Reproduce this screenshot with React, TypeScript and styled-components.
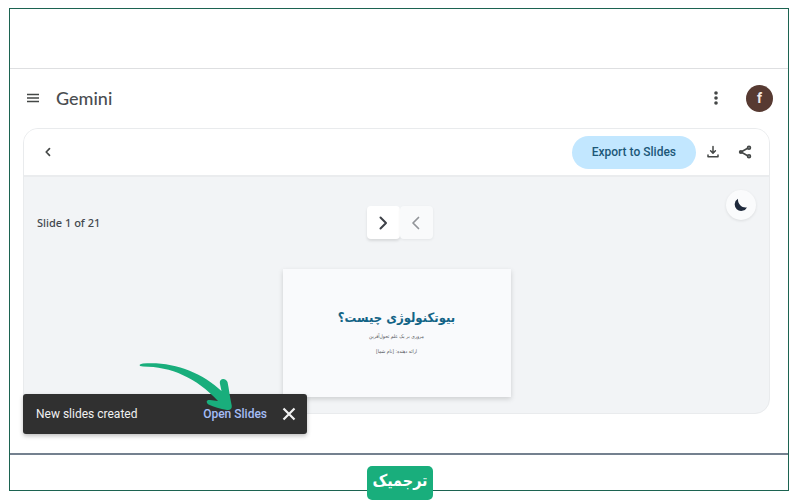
import React from "react";
import styled, { createGlobalStyle } from "styled-components";

const GlobalStyle = createGlobalStyle`
  * { box-sizing: border-box; }
  body { margin: 0; background: #fff; font-family: Roboto, sans-serif; color: #444746; }
  button { font: inherit; color: inherit; border: 0; padding: 0; background: none; cursor: pointer; }
  svg { display: block; }
`;

const Page = styled.div`
  padding: 8px 11px 9px 9px;
`;

const Frame = styled.div`
  position: relative;
  border: 1px solid #1c6351;
`;

const TopStrip = styled.div`
  height: 60px;
  border-bottom: 1px solid #dedfe1;
`;

const Window = styled.main`
  position: relative;
  padding: 0 18px 39px 13px;
  border-bottom: 2px solid #74818f;
`;

const Header = styled.header`
  display: flex;
  align-items: center;
  height: 58px;
  margin: 0 -3px 1px 0;
`;

const IconButton = styled.button`
  display: flex;
  align-items: center;
  justify-content: center;
  width: 20px;
  height: 24px;
`;

const Brand = styled.h1`
  margin: 0 auto 0 13px;
  font: 500 18px/24px Lato, sans-serif;
  color: #4a4d50;
`;

const Avatar = styled.button`
  width: 27px;
  height: 27px;
  margin-left: 20px;
  border-radius: 50%;
  && {
    background: #573a32;
    color: #f3e8e4;
    font: 700 14px/27px Roboto, sans-serif;
  }
`;

const Card = styled.section`
  border: 1px solid #e9ebed;
  border-radius: 15px;
  overflow: hidden;
  background: #f2f4f6;
`;

const Toolbar = styled.div`
  display: flex;
  align-items: center;
  gap: 12px;
  height: 48px;
  padding: 0 14px;
  background: #fff;
  border-bottom: 2px solid #eaecee;
`;

const ExportButton = styled.button`
  height: 33px;
  margin: 0 -5px 0 auto;
  padding: 0 20px;
  border-radius: 17px;
  && {
    background: #c2e7ff;
    color: #1c5878;
    font: 500 12px/33px Roboto, sans-serif;
  }
`;

const Stage = styled.div`
  padding: 13px 13px 16px;
`;

const Controls = styled.div`
  display: grid;
  grid-template-columns: 1fr auto 1fr;
  align-items: center;
  height: 65px;
`;

const Counter = styled.p`
  margin: 0;
  font: 500 11px/16px "Noto Sans", "Open Sans", sans-serif;
  color: #43494f;
`;

const Pager = styled.div`
  display: flex;
  margin-left: 6px;
`;

const PageButton = styled.button`
  display: flex;
  align-items: center;
  justify-content: center;
  width: 33px;
  height: 33px;
  border-radius: 4px;
  && { background: #fff; color: #3e4148; }
  box-shadow: 0 2px 3px #0000001c;
  &:disabled { background: #f9fafb; color: #919498; box-shadow: 0 1px 3px #00000010; }
`;

const ThemeButton = styled.button`
  display: flex;
  align-items: center;
  justify-content: center;
  justify-self: end;
  align-self: start;
  width: 30px;
  height: 30px;
  border-radius: 50%;
  && { background: #fafbfc; color: #1e293b; }
  box-shadow: 0 1px 3px #00000018;
`;

const Slide = styled.article`
  width: 228px;
  min-height: 128px;
  margin: 14px auto 0;
  padding-top: 36px;
  text-align: center;
  background: #f9fafc;
  box-shadow: 0 2px 5px #00000028;
  font-family: "DejaVu Sans Condensed", "DejaVu Sans", sans-serif;
`;

const SlideTitle = styled.h2`
  margin: 0;
  font-size: 13px;
  line-height: 26px;
  font-weight: 700;
  color: #136486;
`;

const SlideText = styled.p`
  margin: 0 0 5px;
  font-size: 5px;
  line-height: 10px;
  color: #50545a;
`;

const Toast = styled.div`
  position: absolute;
  left: 13px;
  bottom: 19px;
  display: flex;
  align-items: center;
  width: 284px;
  height: 40px;
  padding: 0 8px 0 13px;
  border-radius: 3px;
  background: #303030;
  color: #f1f1f1;
  font: 400 12px/16px Roboto, sans-serif;
  box-shadow: 0 2px 4px #00000040;
`;

const ToastLink = styled.a`
  margin: 0 12px 0 auto;
  color: #a5bdf6;
  font-weight: 500;
  text-decoration: none;
`;

const Pointer = styled.svg`
  position: absolute;
  left: 113px;
  bottom: 22px;
  width: 100px;
  height: 52px;
  pointer-events: none;
`;

const Footer = styled.footer`
  height: 35px;
`;

const Logo = styled.a`
  position: absolute;
  left: 50%;
  bottom: -10px;
  width: 66px;
  height: 34px;
  margin-left: -32px;
  border-radius: 5px;
  background: #19ae7c;
  color: #fff;
  font: 700 16px/30px "DejaVu Sans Condensed", "DejaVu Sans", sans-serif;
  text-align: center;
  text-decoration: none;
`;

const stroke = { fill: "none", stroke: "currentColor", strokeLinecap: "round", strokeLinejoin: "round" } as const;

export default function App() {
  return (
    <>
      <GlobalStyle />
      <Page>
        <Frame>
          <TopStrip />
          <Window>
            <Header>
              <IconButton aria-label="Main menu">
                <svg width="14" height="12" viewBox="0 0 14 12" {...stroke} strokeWidth="1.5" strokeLinecap="butt">
                  <path d="M1 2.600h12M1 6h12M1 9.400h12" />
                </svg>
              </IconButton>
              <Brand>Gemini</Brand>
              <IconButton aria-label="More options">
                <svg width="6" height="16" viewBox="0 0 6 16" fill="currentColor">
                  <circle cx="3" cy="3" r="1.8" />
                  <circle cx="3" cy="8" r="1.8" />
                  <circle cx="3" cy="13" r="1.8" />
                </svg>
              </IconButton>
              <Avatar aria-label="Account">f</Avatar>
            </Header>
            <Card>
              <Toolbar>
                <IconButton aria-label="Back">
                  <svg width="10" height="12" viewBox="0 0 10 12" {...stroke} strokeWidth="1.7">
                    <path d="M6.500 2.700 3.200 6l3.300 3.300" />
                  </svg>
                </IconButton>
                <ExportButton>Export to Slides</ExportButton>
                <IconButton aria-label="Download">
                  <svg width="14" height="14" viewBox="0 0 14 14" {...stroke} strokeWidth="1.5">
                    <path d="M7 1.500v6M4.600 5.800 7 8.200l2.400-2.400M2 10v1.800h10V10" />
                  </svg>
                </IconButton>
                <IconButton aria-label="Share">
                  <svg width="14" height="14" viewBox="0 0 14 14" {...stroke} strokeWidth="1.5">
                    <path d="M3 7l8-4.500M3 7l8 4.500" />
                    <circle cx="2.900" cy="7" r="2.100" fill="currentColor" stroke="none" />
                    <circle cx="11" cy="2.700" r="1.500" fill="#8d979c" />
                    <circle cx="11" cy="11.300" r="1.500" fill="#8d979c" />
                  </svg>
                </IconButton>
              </Toolbar>
              <Stage>
                <Controls>
                  <Counter>Slide 1 of 21</Counter>
                  <Pager>
                    <PageButton aria-label="Next slide">
                      <svg width="14" height="16" viewBox="0 0 14 16" {...stroke} strokeWidth="2">
                        <path d="m4.500 2.500 5.500 5.500-5.500 5.500" />
                      </svg>
                    </PageButton>
                    <PageButton aria-label="Previous slide" disabled>
                      <svg width="14" height="16" viewBox="0 0 14 16" {...stroke} strokeWidth="1.700">
                        <path d="M9.500 2.500 4 8l5.500 5.500" />
                      </svg>
                    </PageButton>
                  </Pager>
                  <ThemeButton aria-label="Dark mode">
                    <svg width="14" height="14" viewBox="0 0 14 14" fill="currentColor">
                      <path d="M4 .8A6.500 6.500 0 1 0 13 9.400C8.500 10.500 3.500 6.500 4 .8Z" />
                    </svg>
                  </ThemeButton>
                </Controls>
                <Slide dir="rtl" lang="fa">
                  <SlideTitle>بیوتکنولوژی چیست؟</SlideTitle>
                  <SlideText>مروری بر یک علم تحول‌آفرین</SlideText>
                  <SlideText>ارائه دهنده: [نام شما]</SlideText>
                </Slide>
              </Stage>
            </Card>
            <Toast role="status">
              <span>New slides created</span>
              <ToastLink href="#slides">Open Slides</ToastLink>
              <IconButton aria-label="Close">
                <svg width="14" height="14" viewBox="0 0 14 14" {...stroke} strokeWidth="2.200" strokeLinecap="butt">
                  <path d="m1.500 1.500 11 11M12.500 1.500l-11 11" />
                </svg>
              </IconButton>
              <Pointer viewBox="136 360 100 52" aria-hidden="true">
                <path
                  fill="#19ae7c"
                  d="M140 366C139 364.500 140 364 143 363.500C172 361 202 372 221.500 391L219.800 383C219.500 378 225.500 377.500 227.500 382C229 389 230 398 231.800 406C232 409 230 410.500 227 410C220 409 214 407 208.500 404.500C205.500 402 206.500 399.500 210 400L218 401C197 378 171 366.500 143 366.500Z"
                />
              </Pointer>
            </Toast>
          </Window>
          <Footer />
          <Logo href="#home" lang="fa" dir="rtl">ترجمیک</Logo>
        </Frame>
      </Page>
    </>
  );
}
